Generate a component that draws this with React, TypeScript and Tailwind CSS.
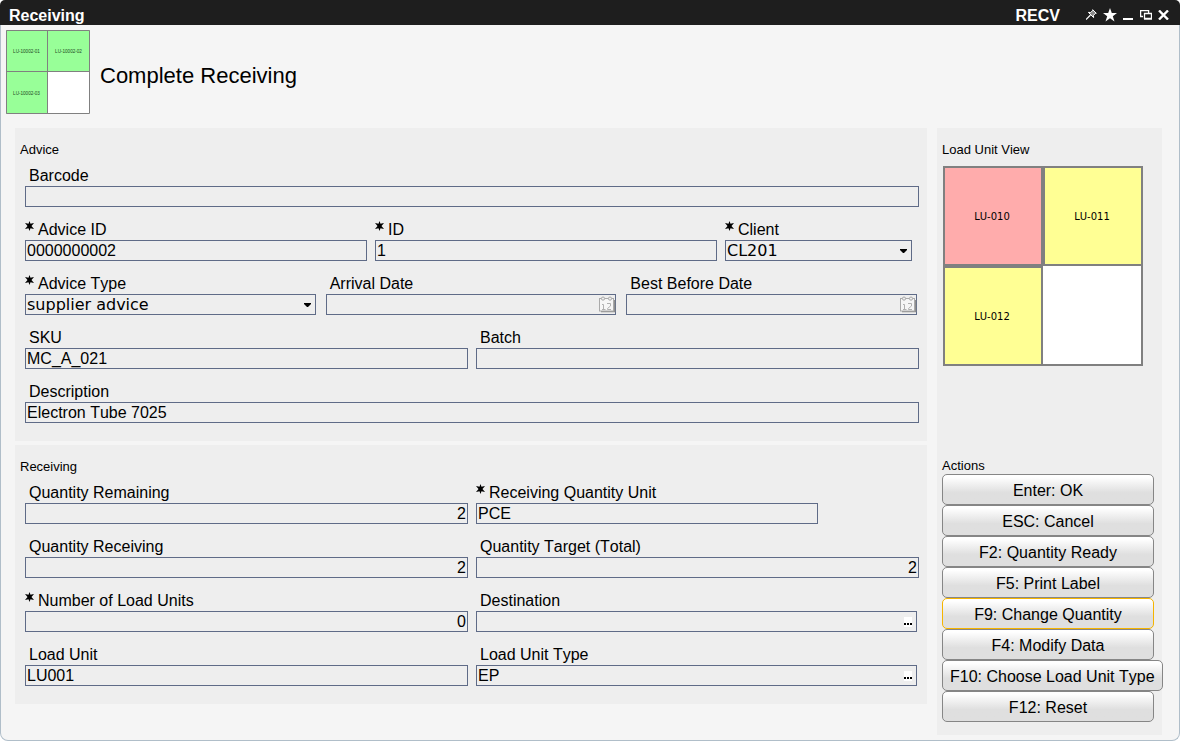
import { useId } from 'react'
import type { ReactNode } from 'react'

const BOX =
  'block h-[21px] w-full appearance-none rounded-none border border-[#5f6b87] bg-[#eee] px-px text-base/[19px] text-black outline-none'

function RequiredMark() {
  return (
    <svg viewBox="0 0 9 10" className="mt-0.5 h-2.5 w-[9px] shrink-0" aria-hidden="true">
      <path
        d="M4.500 0 5.500 2.800 9 2.100 6.500 5 9 7.900 5.500 7.200 4.500 10 3.500 7.200 0 7.900 2.500 5 0 2.100 3.500 2.800Z"
        fill="#000"
      />
    </svg>
  )
}

function CalendarIcon() {
  return (
    <svg viewBox="0 0 17 17" className="h-[17px] w-[17px]" aria-hidden="true">
      <path d="M15.500 4v11.500H2" fill="none" stroke="#8f8f8f" strokeWidth="1.600" />
      <rect x=".5" y="2.500" width="14" height="12.500" fill="#f6f6f6" stroke="#aaa" />
      <g fill="#eee" stroke="#aaa">
        <circle cx="4" cy="2.600" r="1.600" />
        <circle cx="11" cy="2.600" r="1.600" />
      </g>
      <path d="M6 2.500h3" stroke="#aaa" />
      <path
        d="M3 8.500h1.500v5M3 13.500h3.500M8 7.500h3.500V10L8.500 12.500v1H12"
        fill="none"
        stroke="#b0b0b0"
      />
    </svg>
  )
}

type FieldProps = {
  label: string
  value?: string
  required?: boolean
  numeric?: boolean
  kind?: 'text' | 'select' | 'date' | 'lookup'
  className?: string
}

function Field({ label, value = '', required, numeric, kind = 'text', className = '' }: FieldProps) {
  const id = useId()
  return (
    <div className={className}>
      <div className={required ? 'flex h-[21px] items-start gap-1' : 'flex h-[21px] items-start pl-1'}>
        {required && <RequiredMark />}
        <label htmlFor={id} className="pt-0.5 text-base/[18px] whitespace-nowrap">
          {label}
        </label>
      </div>
      <div className="relative">
        {kind === 'select' ? (
          <select id={id} className={`${BOX} font-['DejaVu_Sans',sans-serif]`} defaultValue={value}>
            <option>{value}</option>
          </select>
        ) : (
          <input id={id} defaultValue={value} className={numeric ? `${BOX} text-right` : BOX} />
        )}
        {kind === 'select' && (
          <svg viewBox="0 0 7 4" className="pointer-events-none absolute top-[9px] right-[5px] h-1 w-[7px]" aria-hidden="true">
            <path d="M0 0h7v1L4 4H3L0 1Z" fill="#000" />
          </svg>
        )}
        {kind === 'date' && (
          <button type="button" aria-label={`Pick ${label}`} className="absolute top-[2px] right-0">
            <CalendarIcon />
          </button>
        )}
        {kind === 'lookup' && (
          <button type="button" aria-label={`Look up ${label}`} className="absolute top-[6px] right-[5px] h-2.5 w-2 bg-white">
            <svg viewBox="0 0 8 10" className="h-2.5 w-2" aria-hidden="true">
              <path d="M0 6h2v2H0zM3 6h2v2H3zM6 6h2v2H6z" fill="#000" />
            </svg>
          </button>
        )}
      </div>
    </div>
  )
}

function Heading({ children }: { children: ReactNode }) {
  return <h2 className="text-[13px]/[16px]">{children}</h2>
}

function TitleBar() {
  return (
    <header className="flex h-[25px] items-center rounded-t-[5px] bg-[#1e1e1e] pt-1 pr-[11px] pl-[9px] text-white">
      <span className="pt-0.5 text-base/[20px] font-bold">Receiving</span>
      <span className="ml-auto pt-0.5 text-base/[20px] font-bold">RECV</span>
      <div className="ml-[26px] flex items-center gap-1.5">
        <button type="button" aria-label="Pin">
          <svg viewBox="0 0 11 11" className="size-[11px]">
            <path d="M0 10.500 4.500 6" stroke="#fff" strokeWidth="1.200" />
            <path
              d="M6.700.700 10.300 4.300 9.300 4.500 7.500 6.300 7.600 8.600 2.400 3.400 4.700 3.500 6.500 1.700Z"
              fill="#8a8a8a"
              stroke="#fff"
            />
          </svg>
        </button>
        <button type="button" aria-label="Favorite">
          <svg viewBox="0 0 14 14" className="size-3.5">
            <path d="m7 0 1.800 5H14L9.800 8.200 11.500 13.500 7 10.300 2.500 13.500 4.200 8.200 0 5H5.200Z" fill="#fff" />
          </svg>
        </button>
        <button type="button" aria-label="Minimize">
          <svg viewBox="0 0 11 12" className="h-3 w-[11px]">
            <path d="M0 9h10v2H0z" fill="#fff" />
          </svg>
        </button>
        <button type="button" aria-label="Restore">
          <svg viewBox="0 0 12 10" className="h-2.5 w-3" fill="none" stroke="#fff" strokeWidth="1.300">
            <path d="M3 6.500H.6v-6h8V3M4.500 3.500h7v5h-7zM4 9.200h8" />
          </svg>
        </button>
        <button type="button" aria-label="Close">
          <svg viewBox="0 0 11 10" className="h-2.5 w-[11px]" stroke="#fff" strokeWidth="2.400">
            <path d="m1 .5 9 9m0-9-9 9" />
          </svg>
        </button>
      </div>
    </header>
  )
}

function StoredUnits() {
  return (
    <svg viewBox="0 0 84 84" className="size-[84px] shrink-0" fontFamily="Liberation Sans, Arial, sans-serif" fontSize="4.600" textAnchor="middle">
      <path d="M0 0h84v84H0z" fill="#fff" />
      <path d="M0 0h84v42H42v42H0z" fill="#98ff98" />
      <path d="M.5.5h83v83H.5zM0 41.500h84M41.500 0v84" fill="none" stroke="#808080" />
      <g fill="#1f4a1f">
        <text x="20.500" y="22.500">LU-10002-01</text>
        <text x="62.500" y="22.500">LU-10002-02</text>
        <text x="20.500" y="64.500">LU-10002-03</text>
      </g>
    </svg>
  )
}

const UNIT =
  "flex items-center justify-center border-2 border-[#808080] pt-0.5 pr-0.5 font-['DejaVu_Sans',sans-serif] text-[10px]/[12px]"

function LoadUnitView() {
  return (
    <div className="mt-2 ml-px grid size-[200px] grid-cols-2 grid-rows-2 bg-white">
      <div className={`${UNIT} bg-[#ffacac]`}>LU-010</div>
      <div className={`${UNIT} bg-[#ffff94]`}>LU-011</div>
      <div className={`${UNIT} bg-[#ffff94]`}>LU-012</div>
      <div className="border-r-2 border-b-2 border-[#808080]" />
    </div>
  )
}

const ACTIONS = [
  'Enter: OK',
  'ESC: Cancel',
  'F2: Quantity Ready',
  'F5: Print Label',
  'F9: Change Quantity',
  'F4: Modify Data',
  'F10: Choose Load Unit Type',
  'F12: Reset',
]

export default function App() {
  return (
    <div className="flex min-h-screen flex-col bg-white font-['Liberation_Sans',Arial,sans-serif] text-black [font-kerning:none]">
      <TitleBar />
      <main className="flex grow flex-col rounded-b-lg border border-t-0 border-[#b0bec9] bg-[#f5f5f5] pr-[17px] pb-[5px]">
        <div className="flex items-center gap-2.5 pt-[5px] pl-[5px]">
          <StoredUnits />
          <h1 className="pt-2 text-[22px]/[26px]">Complete Receiving</h1>
        </div>
        <div className="mt-3.5 flex grow items-stretch gap-2.5 pl-3.5">
          <form className="flex min-w-0 grow flex-col gap-1">
            <section className="bg-[#eee] pt-3.5 pr-2 pb-[18px] pl-[5px]">
              <Heading>Advice</Heading>
              <div className="mt-[7px] flex flex-col gap-3 pl-[5px]">
                <Field label="Barcode" />
                <div className="flex gap-2 pr-[7px]">
                  <Field label="Advice ID" value="0000000002" required className="flex-[342]" />
                  <Field label="ID" value="1" required className="flex-[342]" />
                  <Field label="Client" value="CL201" required kind="select" className="flex-[187]" />
                </div>
                <div className="flex gap-2.5 pr-0.5">
                  <Field label="Advice Type" value="supplier advice" required kind="select" className="flex-1" />
                  <Field label="Arrival Date" kind="date" className="flex-1" />
                  <Field label="Best Before Date" kind="date" className="flex-1" />
                </div>
                <div className="grid grid-cols-2 gap-2">
                  <Field label="SKU" value="MC_A_021" />
                  <Field label="Batch" />
                </div>
                <Field label="Description" value="Electron Tube 7025" />
              </div>
            </section>
            <section className="bg-[#eee] pt-3.5 pr-2 pb-[18px] pl-[5px]">
              <Heading>Receiving</Heading>
              <div className="mt-[7px] grid grid-cols-2 gap-x-2 gap-y-3 pl-[5px]">
                <Field label="Quantity Remaining" value="2" numeric />
                <Field label="Receiving Quantity Unit" value="PCE" required className="pr-[101px]" />
                <Field label="Quantity Receiving" value="2" numeric />
                <Field label="Quantity Target (Total)" value="2" numeric />
                <Field label="Number of Load Units" value="0" required numeric />
                <Field label="Destination" kind="lookup" className="pr-0.5" />
                <Field label="Load Unit" value="LU001" />
                <Field label="Load Unit Type" value="EP" kind="lookup" className="pr-0.5" />
              </div>
            </section>
          </form>
          <aside className="flex w-[225px] shrink-0 flex-col bg-[#eee] pt-3.5 pb-[13px] pl-[5px]">
            <Heading>Load Unit View</Heading>
            <LoadUnitView />
            <div className="mt-auto">
              <Heading>Actions</Heading>
              <div className="flex flex-col items-start">
                {ACTIONS.map((action) => (
                  <button
                    key={action}
                    type="button"
                    className={`-mr-1 h-[31px] min-w-[212px] rounded-[5px] border bg-linear-to-b from-white from-10% to-[#dfdfdf] to-60% bg-origin-border px-[7px] pt-0.5 text-base/[20px] whitespace-nowrap ${
                      action.startsWith('F9') ? 'border-[#f5b400]' : 'border-[#868686]'
                    }`}
                  >
                    {action}
                  </button>
                ))}
              </div>
            </div>
          </aside>
        </div>
      </main>
    </div>
  )
}
